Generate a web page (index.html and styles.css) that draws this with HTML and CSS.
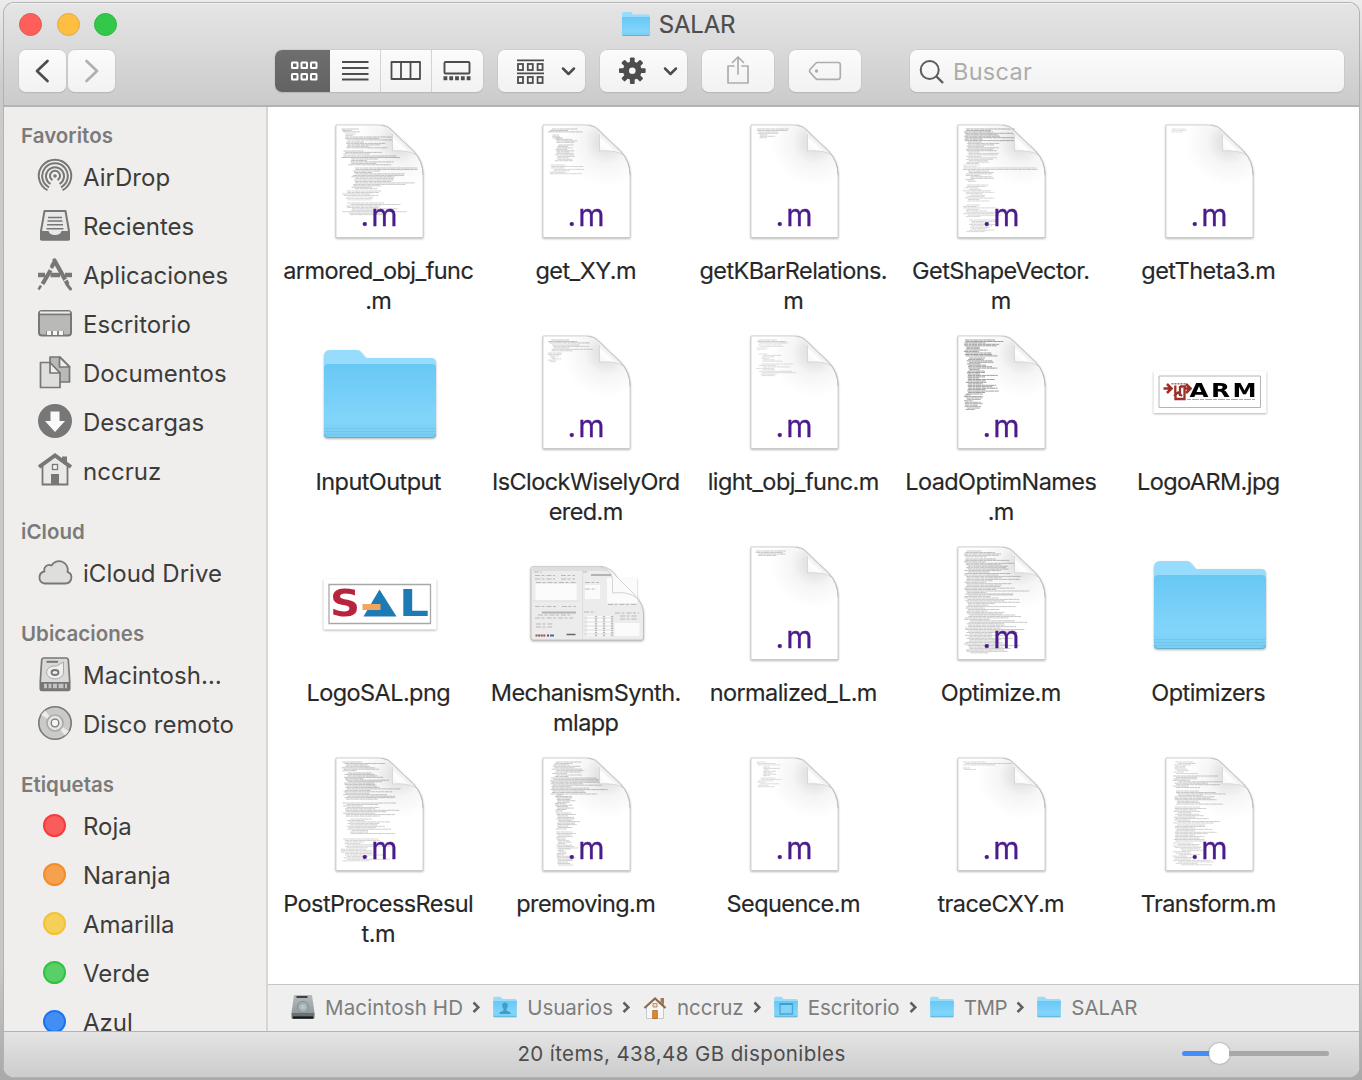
FILE: index.html
```
<!DOCTYPE html>
<html lang="es">
<head>
<meta charset="utf-8">
<title>SALAR</title>
<link rel="stylesheet" href="styles.css">
</head>
<body>
<svg class="defs" width="0" height="0" aria-hidden="true">
  <defs>
    <linearGradient id="gFolder" x1="0" y1="0" x2="0" y2="1">
      <stop offset="0" stop-color="#68c8f4"/><stop offset=".75" stop-color="#82d5fa"/><stop offset="1" stop-color="#78cdf3"/>
    </linearGradient>
    <radialGradient id="gPage" gradientUnits="userSpaceOnUse" cx="64" cy="18" r="44">
      <stop offset="0" stop-color="#d9d9d9"/><stop offset=".25" stop-color="#e6e6e6"/><stop offset=".5" stop-color="#f5f5f5"/><stop offset="1" stop-color="#ffffff"/>
    </radialGradient>
    <linearGradient id="gCurl" gradientUnits="userSpaceOnUse" x1="57" y1="27" x2="69" y2="14">
      <stop offset="0" stop-color="#f4f4f4"/><stop offset=".5" stop-color="#ffffff"/><stop offset="1" stop-color="#dedede"/>
    </linearGradient>
    <linearGradient id="gDrive" x1="0" y1="0" x2="0" y2="1">
      <stop offset="0" stop-color="#b4bcc0"/><stop offset="1" stop-color="#929b9f"/>
    </linearGradient>
    <symbol id="folderBig" viewBox="0 0 114 114">
      <path d="M1 22q0-7 6-7H34q3 0 5 3l4 5H108q5 0 5 5v20H1z" fill="#97dcfd"/>
      <path d="M1 33q0-4 4-4H109q4 0 4 4V99q0 4-4 4H5q-4 0-4-4z" fill="url(#gFolder)"/>
      <path d="M1 93.500H113M1 96.500H113M1 99.500H113" stroke="#5fb4da" stroke-opacity=".35" stroke-width="1"/>
      <path d="M1.500 99.500q0 3 3.500 3H109q3.500 0 3.500-3" fill="none" stroke="#62aed0" stroke-width="1"/>
    </symbol>
    <symbol id="folderSmall" viewBox="0 0 30 26">
      <path d="M1 3q0-2 2-2h7l2 2.500h15q2 0 2 2V12H1z" fill="#97dcfd"/>
      <path d="M1 6H29V23.500q0 1.500-1.500 1.500h-25Q1 25 1 23.500z" fill="url(#gFolder)"/>
      <path d="M1.500 24.500h27" stroke="#5fb0d6" stroke-width="1"/>
    </symbol>
    <symbol id="chev" viewBox="0 0 8 14"><path d="M1.500 2.500 6.300 7.300 1.500 12" fill="none" stroke="#5f5f5f" stroke-width="2.500"/></symbol>
  </defs>
</svg>

<div class="window">
  <header class="toolbar">
    <div class="titlebar">
      <div class="lights"><i class="light red"></i><i class="light yellow"></i><i class="light green"></i></div>
      <div class="title"><svg width="30" height="26"><use href="#folderSmall"/></svg><span>SALAR</span></div>
      <div></div>
    </div>
    <div class="tools">
      <div class="nav">
        <button class="btn nav-btn" aria-label="Atrás"><svg width="47" height="42"><path d="M28.500 11 18 21 28.500 31" fill="none" stroke="#4d4d4d" stroke-width="2.700" stroke-linecap="round" stroke-linejoin="round"/></svg></button>
        <button class="btn nav-btn" aria-label="Adelante"><svg width="47" height="42"><path d="M18.500 11 29 21 18.500 31" fill="none" stroke="#b0b0b0" stroke-width="2.700" stroke-linecap="round" stroke-linejoin="round"/></svg></button>
      </div>
      <div class="btn views">
        <button class="view active" aria-label="Iconos"><svg width="55" height="42"><g fill="none" stroke="#fff" stroke-width="2"><rect x="17" y="12.500" width="5.500" height="5.500" rx=".5"/><rect x="26.500" y="12.500" width="5.500" height="5.500" rx=".5"/><rect x="36" y="12.500" width="5.500" height="5.500" rx=".5"/><rect x="17" y="24" width="5.500" height="5.500" rx=".5"/><rect x="26.500" y="24" width="5.500" height="5.500" rx=".5"/><rect x="36" y="24" width="5.500" height="5.500" rx=".5"/></g></svg></button>
        <button class="view" aria-label="Lista"><svg width="50" height="42"><path d="M12 12H38.500M12 18H38.500M12 24H38.500M12 29.500H38.500" stroke="#4d4d4d" stroke-width="1.900"/></svg></button>
        <button class="view" aria-label="Columnas"><svg width="50" height="42"><path d="M10.500 12h28.500v17h-28.500zM20 12v17M29.500 12v17" fill="none" stroke="#4d4d4d" stroke-width="1.800" stroke-linejoin="round"/></svg></button>
        <button class="view" aria-label="Galería"><svg width="51" height="42"><rect x="12.500" y="12" width="25" height="11.500" rx="1" fill="none" stroke="#4d4d4d" stroke-width="1.900"/><path d="M11.500 28.300H39" stroke="#4d4d4d" stroke-width="4" stroke-dasharray="3.800 2"/></svg></button>
      </div>
      <button class="btn drop" aria-label="Agrupar"><svg width="87" height="42"><g fill="none" stroke="#4d4d4d" stroke-width="1.800"><path d="M19 10.300H46M19 23.300H46"/><rect x="20" y="14" width="5" height="6"/><rect x="29.800" y="14" width="5" height="6"/><rect x="39.600" y="14" width="5" height="6"/><rect x="20" y="27" width="5" height="6"/><rect x="29.800" y="27" width="5" height="6"/><rect x="39.600" y="27" width="5" height="6"/><path d="m65 18.500 5.500 5.500 5.500-5.500" stroke-width="2.500" stroke-linecap="round" stroke-linejoin="round"/></g></svg></button>
      <button class="btn drop" aria-label="Acciones"><svg width="87" height="42"><g transform="translate(32.300 20.700)" fill="#4d4d4d"><g id="teeth"><rect x="-2.400" y="-13.300" width="4.800" height="26.600" rx="1"/><rect x="-13.300" y="-2.400" width="26.600" height="4.800" rx="1"/></g><use href="#teeth" transform="rotate(45)"/><circle r="9.300"/><circle r="3.300" fill="#f7f7f7"/></g><path d="m65 18.500 5.500 5.500 5.500-5.500" fill="none" stroke="#4d4d4d" stroke-width="2.500" stroke-linecap="round" stroke-linejoin="round"/></svg></button>
      <button class="btn wide" aria-label="Compartir"><svg width="72" height="42"><path d="M32 16h-6v17h20V16h-6M36 24V7.500M30.500 12.500 36 7l5.500 5.500" fill="none" stroke="#adadad" stroke-width="1.700" stroke-linecap="round" stroke-linejoin="round"/></svg></button>
      <button class="btn wide" aria-label="Etiquetas"><svg width="72" height="42"><path d="M28.500 12.500H49q2.300 0 2.300 2.300V27q0 2.300-2.300 2.300H28.500q-1 0-2-1l-5.500-6q-1.200-1.400 0-2.800l5.500-6q1-1 2-1z" fill="none" stroke="#adadad" stroke-width="1.700"/><circle cx="27.500" cy="21" r="1.700" fill="#adadad"/></svg></button>
      <div class="btn search"><svg width="42" height="42"><circle cx="19.700" cy="20" r="9" fill="none" stroke="#5c5c5c" stroke-width="2"/><path d="m26.500 26.500 6.500 6.500" stroke="#5c5c5c" stroke-width="2.400"/></svg><span>Buscar</span></div>
    </div>
  </header>

  <div class="body">
    <nav class="sidebar">
      <h2>Favoritos</h2>
      <div class="row"><svg width="36" height="36" viewBox="0 0 36 36" fill="none" stroke="#777" stroke-width="2"><circle cx="18" cy="18" r="1.800" fill="#777" stroke="none"/><path d="M15.500 22.200a5 5 0 1 1 5 0M13.500 26a9 9 0 1 1 9 0M12 29.300a12.800 12.800 0 1 1 12 0M10.500 32.200a16.200 16.200 0 1 1 15 0" /></svg><span>AirDrop</span></div>
      <div class="row"><svg width="36" height="36" viewBox="0 0 36 36"><path d="M7.500 4h21l3.500 20v8.500h-28V24z" fill="#e9e9e8" stroke="#777" stroke-width="2" stroke-linejoin="round"/><path d="M3 24h8.500q1 4 6.500 4t6.500-4H33v7q0 2.500-2.500 2.500h-25Q3 33.500 3 31z" fill="#777"/><path d="M11 10.500h14M10.500 14h15M10 17.800h16M9.500 21.700h17" stroke="#777" stroke-width="1.600"/></svg><span>Recientes</span></div>
      <div class="row"><svg width="36" height="36" viewBox="0 0 36 36" stroke="#777" fill="#777"><path d="M1 19h7M28 19h7M13.500 19h9.500" stroke-width="4.500"/><path d="M17.500 4.500 30 27" stroke-width="4.300" stroke-linecap="round"/><path d="M30 28.500 33.500 33" stroke-width="3" stroke-linecap="round"/><path d="m14 13.500-8.500 14.500" stroke-width="4.200"/><path d="m16.500 7.500-1.500 3" stroke-width="4" stroke-linecap="round"/><path d="M4 29.500 1.500 33.500" stroke-width="2.500"/><path d="m27 25 5-3M11 12l5 3" stroke="#efeeec" stroke-width="1.200"/></svg><span>Aplicaciones</span></div>
      <div class="row"><svg width="36" height="36" viewBox="0 0 36 36"><rect x="2" y="6" width="32" height="24.500" rx="3" fill="#b9b9b8" stroke="#777" stroke-width="2"/><path d="M3 7.500h30" stroke="#ececeb" stroke-width="2"/><path d="M2 9.500h32" stroke="#777" stroke-width="1.500"/><path d="M9 30h18v-4H9z" fill="#8a8a8a"/><path d="M10 28h4M16 28h4M22 28h4" stroke="#f7f7f7" stroke-width="4"/></svg><span>Escritorio</span></div>
      <div class="row"><svg width="36" height="36" viewBox="0 0 36 36" stroke="#777" stroke-width="1.700" stroke-linejoin="round"><path d="M13 3h10l9.500 9.500v15.500H13z" fill="#b9b9b8"/><path d="M22.500 3v10h10z" fill="#efefee"/><path d="M3.500 8.500h9l10.500 10.500v14.500H3.500z" fill="#dededd"/><path d="M13 8.500v10.500h10z" fill="#efefee"/></svg><span>Documentos</span></div>
      <div class="row"><svg width="36" height="36" viewBox="0 0 36 36"><circle cx="18" cy="18" r="17" fill="#777"/><path d="M13.500 8.500h9v9.500h5.500L18 29 8 18h5.500z" fill="#fafafa"/></svg><span>Descargas</span></div>
      <div class="row"><svg width="36" height="36" viewBox="0 0 36 36"><path d="M5.500 13 18 4l12.500 9.500V32.500h-25z" fill="#e9e9e8" stroke="#777" stroke-width="1.800"/><path d="M2 15 18 3.500 34 15" fill="none" stroke="#777" stroke-width="4"/><path d="M25 4.500h5V12l-5-3.500zM14 22h8v11h-8z" fill="#777"/><rect x="15.500" y="12.500" width="5" height="5" fill="#f5f5f5" stroke="#777" stroke-width="1.300"/></svg><span>nccruz</span></div>
      <h2>iCloud</h2>
      <div class="row"><svg width="36" height="36" viewBox="0 0 36 36"><path d="M7.500 29.500H28.500a6 6 0 0 0 2-11.600A8.700 8.700 0 0 0 14.500 11.500a5 5 0 0 0-7 6A6.100 6.100 0 0 0 7.500 29.500z" fill="#dededd" stroke="#777" stroke-width="1.800" stroke-linejoin="round"/></svg><span>iCloud Drive</span></div>
      <h2>Ubicaciones</h2>
      <div class="row"><svg width="36" height="36" viewBox="0 0 36 36"><path d="M7 2h22q2 0 2.300 2l1.400 21v8q0 1.500-1.500 1.500H4.800q-1.500 0-1.500-1.500v-8L4.700 4Q5 2 7 2z" fill="#d9d9d8" stroke="#777" stroke-width="1.700"/><path d="M3.500 26h29v8h-29z" fill="#777"/><path d="M7 30h3M11.500 30h3M16 30h4M21.500 30h5M28 30h2" stroke="#c4c4c4" stroke-width="4.500"/><path d="M9.500 5.800h11.500" stroke="#777" stroke-width="2"/><path d="M26.500 6v10a8.500 6.500 0 1 1-7-6z" fill="#efefee" stroke="#aaa"/><ellipse cx="18" cy="16.500" rx="3.500" ry="2.500" fill="#eee" stroke="#777" stroke-width="1.800"/></svg><span>Macintosh…</span></div>
      <div class="row"><svg width="36" height="36" viewBox="0 0 36 36"><circle cx="18" cy="18" r="16.200" fill="#cacac9" stroke="#777" stroke-width="1.600"/><path d="m18 18-14-8 4-4.500zM18 18l14 8-4 4.500z" fill="#ececeb"/><circle cx="18" cy="18" r="8" fill="#e6e6e5" stroke="#aaa" stroke-width="1.700"/><circle cx="18" cy="18" r="3.800" fill="#f5f5f5" stroke="#777" stroke-width="1.300"/></svg><span>Disco remoto</span></div>
      <h2>Etiquetas</h2>
      <div class="row"><i class="tag tag-red"></i><span>Roja</span></div>
      <div class="row"><i class="tag tag-orange"></i><span>Naranja</span></div>
      <div class="row"><i class="tag tag-yellow"></i><span>Amarilla</span></div>
      <div class="row"><i class="tag tag-green"></i><span>Verde</span></div>
      <div class="row"><i class="tag tag-blue"></i><span>Azul</span></div>
    </nav>

    <main class="content">
      <div class="files" id="files"></div>
      <div class="pathbar">
        <svg width="26" height="28" viewBox="0 0 26 28"><path d="M4 2H22L24.500 20H1.500z" fill="url(#gDrive)"/><path d="M1.500 20h23v4.500q0 1.500-1.500 1.500H3q-1.500 0-1.500-1.500z" fill="#6a7073"/><path d="M3 24.500h20" stroke="#171717" stroke-width="2.200"/><path d="M6.500 4h11" stroke="#333" stroke-width="1.800"/><circle cx="13" cy="14" r="5.500" fill="#a6afb3" stroke="#858e92"/><circle cx="13" cy="14" r="2.500" fill="#bcc4c7"/></svg><span class="crumb c-hd">Macintosh HD</span><svg class="sep" width="8" height="14"><use href="#chev"/></svg>
        <svg width="26" height="22"><use href="#folderSmall"/><path d="M13 6.500q2.800 0 2.800 3.200 0 2-1.300 3.300v1.500l4 2V18h-11v-1.500l4-2V13q-1.300-1.300-1.300-3.300 0-3.200 2.800-3.200z" fill="#3f9fcb"/></svg><span class="crumb">Usuarios</span><svg class="sep" width="8" height="14"><use href="#chev"/></svg>
        <svg width="26" height="26" viewBox="0 0 26 26"><path d="M4.500 12 13 5l8.500 7v12.500h-17z" fill="#f6f6f6" stroke="#c7c7c7"/><path d="M18.500 4h3.500v7l-3.500-3z" fill="#9d7c5e"/><path d="M2.500 14 13 4.500 23.500 14" fill="none" stroke="#8b6a49" stroke-width="2.300"/><path d="M10.700 16.500h4.600v8h-4.600z" fill="#e88524" stroke="#a8642a" stroke-width=".8"/><path d="M11 9.500h4v3.500h-4z" fill="#f5dfc7" stroke="#a97a51" stroke-width=".8"/></svg><span class="crumb">nccruz</span><svg class="sep" width="8" height="14"><use href="#chev"/></svg>
        <svg width="26" height="22"><use href="#folderSmall"/><path d="M7 8h12.500v10H7z" fill="#82d3f7" stroke="#4aa9d6" stroke-width="1.400"/><path d="M7 8h12.500" stroke="#3f9fcb" stroke-width="2"/></svg><span class="crumb">Escritorio</span><svg class="sep" width="8" height="14"><use href="#chev"/></svg>
        <svg width="26" height="22"><use href="#folderSmall"/></svg><span class="crumb c-tight">TMP</span><svg class="sep" width="8" height="14"><use href="#chev"/></svg>
        <svg width="26" height="22"><use href="#folderSmall"/></svg><span class="crumb">SALAR</span>
      </div>
    </main>
  </div>

  <footer class="status">
    <div></div>
    <span>20 ítems, 438,48 GB disponibles</span>
    <div class="slider"><i class="fill"></i><i class="knob"></i><i class="rest"></i></div>
  </footer>
</div>
<script src="files.js"></script>
</body>
</html>
```
FILE: styles.css
```
* { box-sizing: border-box; }
body {
  margin: 0;
  height: 1080px;
  padding: 3px 3px 3px 4px;
  overflow: hidden;
  background: linear-gradient(#ececec, #cbcbcb 8%, #c6c6c6 90%, #a9a9a9);
  font-family: Inter, "Liberation Sans", sans-serif;
  color: #3b3b3b;
}
.defs { position: absolute; }
svg { display: block; flex: none; }
button { border: 0; background: none; padding: 0; margin: 0; display: block; }
.window {
  height: 1074px;
  display: flex;
  flex-direction: column;
  border-radius: 10px;
  overflow: hidden;
  background: #fff;
  box-shadow: 0 0 0 1px #b2b2b2;
}

.toolbar {
  height: 104px;
  flex: none;
  background: linear-gradient(#e5e5e5, #cbcbcb);
  border-bottom: 2px solid #b3b3b3;
  box-shadow: inset 0 1px #f3f3f3;
}
.titlebar { height: 47px; display: grid; grid-template-columns: 1fr auto 1fr; align-items: center; padding-bottom: 5px; }
.lights { display: flex; gap: 14.500px; padding-left: 15px; }
.light { width: 23px; height: 23px; border-radius: 50%; border: 1px solid; }
.red { background: #fe5f5b; border-color: #e9544f; }
.yellow { background: #fdbe41; border-color: #e5a83b; }
.green { background: #34c84a; border-color: #2db43f; }
.title { display: flex; align-items: center; gap: 8px; font-size: 24px; color: #4d4d4d; letter-spacing: -.2px; margin-right: 7px; -webkit-text-stroke: .2px; }
.tools { display: flex; padding: 0 15px; gap: 15px; }
.nav { display: flex; gap: 2px; margin-right: 145px; }
.btn {
  height: 42px;
  border-radius: 7px;
  background: linear-gradient(#fbfbfb, #f2f2f2);
  box-shadow: 0 0 0 .5px #c4c4c4, 0 1px 1px #ababab;
  overflow: hidden;
}
.nav-btn { width: 47px; }
.views { display: flex; width: 208px; }
.view + .view { border-left: 1px solid #d4d4d4; }
.view:nth-child(2) { border-left: 0; }
.active { background: linear-gradient(#6e6e6e, #636363); }
.drop { width: 87px; }
.wide { width: 72px; }
.search { flex: 1; margin-left: 34px; display: flex; align-items: center; gap: 1px; font-size: 23.500px; letter-spacing: .3px; color: #acacac; }

.body { flex: 1; display: flex; min-height: 0; }
.sidebar { width: 264px; flex: none; padding-top: 11px; background: #efeeec; border-right: 2px solid #d6d6d5; overflow: hidden; }
.sidebar h2 { margin: 18px 0 0; height: 35px; line-height: 35px; padding-left: 17px; font-size: 20.500px; font-weight: 600; color: #7b7b7a; letter-spacing: .03px; }
.sidebar h2:first-child { margin-top: 0; }
.row { height: 49px; padding-left: 32.500px; display: flex; align-items: center; gap: 10.500px; font-size: 24px; color: #3c3c3b; letter-spacing: .02px; }
.row svg { margin-top: -3px; }
.tag { width: 23px; height: 23px; margin: -3px 6.500px 0 6.500px; border: 2px solid; border-radius: 50%; }
.tag-red { background: #f85d5b; border-color: #f53c3a; }
.tag-orange { background: #f5a14e; border-color: #f38d2b; }
.tag-yellow { background: #f5cf58; border-color: #f2c335; }
.tag-green { background: #58d067; border-color: #30c245; }
.tag-blue { background: #438ef5; border-color: #1b73f2; }

.content { flex: 1; min-width: 0; display: flex; flex-direction: column; }
.files { flex: 1; display: grid; grid-template-columns: repeat(5, 207.500px); grid-template-rows: repeat(4, 211px); padding: 17px 0 0 6.500px; min-height: 0; overflow: hidden; }
.file { display: flex; flex-direction: column; align-items: center; gap: 18px; }
.icon { margin-left: 3px; overflow: visible; filter: drop-shadow(0 1px 1px rgba(0,0,0,.3)); }
.label { text-align: center; font-size: 23.500px; line-height: 30px; letter-spacing: -.57px; color: #272727; white-space: nowrap; -webkit-text-stroke: .15px; }
.ext { font: 30px Inter, "Liberation Sans", sans-serif; fill: #4b1a8c; stroke: #4b1a8c; stroke-width: .3; }
.code { fill: none; stroke: #555; stroke-width: .7; }

.pathbar { height: 47px; flex: none; border-top: 1px solid #c6c6c6; background: #efefef; display: flex; align-items: center; padding: 0 0 2px 22px; font-size: 20.500px; color: #7d7d7d; }
.crumb { margin: 0 9px; white-space: nowrap; }
.c-hd { letter-spacing: .15px; }
.c-tight { letter-spacing: -.4px; }
.sep { margin-right: 12px; }

.status { height: 46px; flex: none; display: grid; grid-template-columns: 1fr auto 1fr; align-items: center; border-top: 1px solid #b3b3b3; background: linear-gradient(#e4e4e4, #cccccc); font-size: 20.500px; letter-spacing: .4px; color: #4d4d4d; padding-bottom: 2px; }
.slider { justify-self: end; margin-right: 30.500px; width: 147px; display: flex; align-items: center; }
.fill { width: 28px; height: 5px; border-radius: 3px 0 0 3px; background: #438dfb; }
.knob { width: 21px; height: 21px; border-radius: 50%; background: #fff; box-shadow: 0 0 2px #7d7d7d; margin: 0 -1px; }
.rest { flex: 1; height: 5px; border-radius: 0 3px 3px 0; background: #a8a8a8; }
```
FILE: files.js
```
// Each preview block: [first y, last y, left indent, indent spread, longest line, strength]
const FILES = [
  { label: "armored_obj_func<br>.m", code: [[5,8,6,2,28,1],[10,12,9,2,16,.8],[13,16,9,4,60,1],[18,25,10,3,48,1],[27,31,8,3,46,1],[32,34,6,2,80,1.1],[35,42,12,4,50,1],[44,46,6,14,80,1],[47,55,16,4,56,1],[56,66,16,4,60,.9],[67,72,5,18,50,.8],[73,77,10,2,28,.6],[79,92,5,12,66,.8]] },
  { label: "get_XY.m", code: [[5,9,5,5,40,1],[11,14,9,1,14,.8],[14,19,13,3,24,.9],[21,27,12,4,24,.9],[28,38,12,4,26,.8],[41,51,5,8,34,.7]] },
  { label: "getKBarRelations.<br>m", code: [[5,7,6,1,46,.9],[8,14,7,3,24,.8]] },
  { label: "GetShapeVector.<br>m", code: [[5,18,6,3,52,1.3],[18,27,8,3,40,1],[28,40,8,4,34,.8],[41,43,5,1,20,.5],[44,46,5,1,80,.8],[47,58,8,5,28,.9],[61,78,5,9,30,.7],[81,94,5,6,38,.7],[96,108,8,9,30,.7]] },
  { label: "getTheta3.m", code: [[5,8,5,2,18,.5]] },
  { kind: "folder", label: "InputOutput" },
  { label: "IsClockWiselyOrd<br>ered.m", code: [[5,9,5,4,46,1],[10,17,8,4,44,.8],[18,27,5,5,16,.7]] },
  { label: "light_obj_func.m", code: [[5,8,5,4,38,.8],[10,15,6,4,28,.5],[19,27,8,5,24,.6],[29,41,5,8,36,.6]] },
  { label: "LoadOptimNames<br>.m", code: [[5,22,6,3,38,1.6],[23,42,9,3,32,1.6],[43,59,8,3,32,1.6],[60,75,6,4,20,1.4]] },
  { kind: "arm", label: "LogoARM.jpg" },
  { kind: "sal", label: "LogoSAL.png" },
  { kind: "app", label: "MechanismSynth.<br>mlapp" },
  { label: "normalized_L.m", code: [[5,7,5,1,46,.9],[8,10,7,2,44,.9]] },
  { label: "Optimize.m", code: [[5,12,6,4,42,1],[13,28,6,5,50,1.1],[29,48,6,4,64,1],[49,68,6,5,60,.9],[69,84,6,7,60,.9],[85,108,6,7,56,.9]] },
  { kind: "folder", label: "Optimizers" },
  { label: "PostProcessResul<br>t.m", code: [[5,15,6,5,42,1],[16,28,8,6,50,1.1],[29,43,7,5,60,1],[46,60,7,6,60,.9],[62,77,10,7,50,.8],[82,105,5,8,50,.7]] },
  { label: "premoving.m", code: [[5,20,9,6,34,.9],[21,37,7,4,60,1],[38,55,12,3,18,1],[56,73,13,3,22,.9],[75,91,13,3,22,.8],[92,108,14,3,20,.8]] },
  { label: "Sequence.m", code: [[5,8,6,2,24,.6],[10,20,12,3,16,.7],[21,31,6,7,22,.6]] },
  { label: "traceCXY.m", code: [[5,9,5,3,50,.7],[11,13,5,2,20,.7]] },
  { label: "Transform.m", code: [[5,18,7,6,26,.7],[19,32,7,7,48,.9],[34,48,7,6,52,.9],[50,66,8,5,44,.8],[68,84,8,4,42,.8],[86,108,7,10,38,.7]] }
];

let seed = 11;
const rnd = () => (seed = (seed * 16807) % 2147483647) / 2147483647;

function codeLines(blocks) {
  return blocks.map(([y0, y1, x, spread, len, k]) => {
    let d = "";
    for (let y = y0; y < y1; y += 1.45) {
      const left = x + rnd() * spread;
      const room = y < 27 ? 57 : 82;
      const right = Math.min(left + len * (0.3 + rnd() * 0.7), room);
      d += `M${left.toFixed(1)} ${y.toFixed(1)}H${right.toFixed(1)}`;
    }
    return `<path class="code" d="${d}" stroke-opacity="${Math.min(1, k * 0.5)}" stroke-dasharray="4.300 .4 2.700 .3 5.600 .4"/>`;
  }).join("");
}

const page = "M.5 1H43Q52 1 58 8L78 27Q87.500 37 87.500 51V113.500H.5z";
const curl = `<path d="M46 1Q56 4 57 13V27Q71 25.500 80 30L78 27 58 8Q52 1 46 1z" fill="url(#gCurl)"/>
  <path d="M57 10V27Q72 25.500 81 31" fill="none" stroke="#cfcfcf" stroke-width=".7"/>
  <path d="M46 1Q53 1.500 58 8L78 27Q87.500 37 87.500 51" fill="none" stroke="#b9b9b9" stroke-width=".8"/>`;

const draw = {
  doc: f => `<g transform="translate(12.500 0)"><path d="${page}" fill="url(#gPage)" stroke="#c2c2c2" stroke-width=".7"/>
    ${codeLines(f.code)}${curl}<text class="ext" x="25" y="102" textLength="37">.m</text></g>`,
  folder: () => `<use href="#folderBig"/>`,
  arm: () => `<path d="M.5 36h113v42H.500z" fill="#fff"/><path d="M6 41h101.500v31.500H6z" fill="#fff" stroke="#b4b4b4"/>
    <g fill="none" stroke="#9e2f28"><path d="M10.500 53.500h8M14 49l4.500 4.500-4.500 4.500M31 53.500h6M33 49l4.500 4.500-4.500 4.500" stroke-width="2.600"/><path d="M22.300 50.500v8h2M31.500 53v11h-9v-4M27 51.500h6M27 51v10M21 61l4-3.500 4 3.500" stroke-width="2.300"/></g>
    <path d="M18.500 48.700h14" stroke="#b5675f" stroke-width="1.500" stroke-dasharray="2 1"/>
    <g font-family="DejaVu Sans" font-weight="700" font-size="19.500"><text x="36.500" y="62" textLength="19" lengthAdjust="spacingAndGlyphs">A</text><text x="58" y="62" textLength="19" lengthAdjust="spacingAndGlyphs">R</text><text x="79.500" y="62" textLength="24" lengthAdjust="spacingAndGlyphs">M</text></g>
    <path d="M34 64.500h68" stroke="#aaa" stroke-width="1.100" stroke-dasharray="4 1 7 1"/>`,
  sal: () => `<path d="M.5 33h113v50.500H.500z" fill="#fff"/><path d="M6 38.500h101.500v39H6z" fill="#fff" stroke="#a8a8a8" stroke-width="1.300"/>
    <g font-family="DejaVu Sans" font-weight="700" font-size="37"><text x="7" y="70" fill="#b9243d" textLength="30" lengthAdjust="spacingAndGlyphs">S</text><text x="76" y="70" fill="#1e7ab4" textLength="30" lengthAdjust="spacingAndGlyphs">L</text></g>
    <path d="M56.500 43.500 73.500 70.500h-33z" fill="#1e7ab4"/><path d="M39.500 58H57.500v6H39.500z" fill="#f6a65c"/>`,
  app: () => `<path d="M3 20.500H70Q80 21 86 30L104 48Q113.500 58 113.500 68V92q0 2-2 2H3q-2 0-2-2V22.500q0-2 2-2z" fill="#ececec" stroke="#b8b8b8" stroke-width=".8"/>
    <path d="M1 22.500q0-2 2-2H70Q78 21 83 25H1z" fill="#dedede"/>
    <path d="M5.500 38h41v16.500h-41zM55 39h15v14h-15zM77 32h30v25H77zM84.500 77h25v13h-25zM57 70h25v20H57z" fill="#fbfbfb"/>
    <g fill="none" stroke="#b3b3b3" stroke-width=".9" stroke-dasharray="5 1.500 3 2"><path d="M4 26h8M52 26h5M5 29.500h20M31 29.500h14M5 33h20M31 33h14M6 36.500h40M55 36.500h14M5 60.500h22M32 60.500h14M8 69h32M5 72h38M6 78h18M6 81h16M54 66h12M85 67h24M90 70h18M90 73h18M55 43h12M78 58.500h28"/></g>
    <path d="M52.500 25v68M2 55h47" stroke="#dedede"/><path d="M12 66.500h34M61 29h20" stroke="#b3b3b3" stroke-width="1.800"/>
    <path d="M66 70v20M74 70v20M82 70v20" stroke="#bbb" stroke-width="2.300" stroke-dasharray="1.500 .8"/><path d="M54 72h28M54 76h28M54 80h28M54 84h28M54 88h28" stroke="#d2d2d2" stroke-width=".7"/>
    <path d="M5.500 89.500h10" stroke="#974f4f" stroke-width="2" stroke-dasharray="2 .6"/><path d="M17 89.500h2" stroke="#b9243d" stroke-width="2"/><path d="M20 89.500h4" stroke="#1e7ab4" stroke-width="2"/><path d="M36.500 88.500h9" stroke="#666" stroke-width="1.500"/>
    <path d="M70 20.500Q82 24 82.500 33V47Q98 45 107 52L104 48 86 30Q80 21 70 20.500z" fill="#fafafa" stroke="#c4c4c4" stroke-width=".7"/>`
};

document.getElementById("files").innerHTML = FILES.map(f =>
  `<div class="file"><svg class="icon" width="114" height="114" viewBox="0 0 114 114">${draw[f.kind || "doc"](f)}</svg><div class="label">${f.label}</div></div>`
).join("");
```
